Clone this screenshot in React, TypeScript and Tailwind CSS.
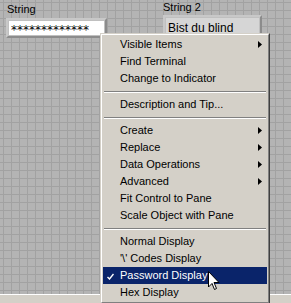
type Item =
  | { kind: "item"; label: string; sub?: boolean; checked?: boolean; active?: boolean }
  | { kind: "sep" };

const items: Item[] = [
  { kind: "item", label: "Visible Items", sub: true },
  { kind: "item", label: "Find Terminal" },
  { kind: "item", label: "Change to Indicator" },
  { kind: "sep" },
  { kind: "item", label: "Description and Tip..." },
  { kind: "sep" },
  { kind: "item", label: "Create", sub: true },
  { kind: "item", label: "Replace", sub: true },
  { kind: "item", label: "Data Operations", sub: true },
  { kind: "item", label: "Advanced", sub: true },
  { kind: "item", label: "Fit Control to Pane" },
  { kind: "item", label: "Scale Object with Pane" },
  { kind: "sep" },
  { kind: "item", label: "Normal Display" },
  { kind: "item", label: "'\\' Codes Display" },
  { kind: "item", label: "Password Display", checked: true, active: true },
  { kind: "item", label: "Hex Display" },
];

function Arrow() {
  return (
    <svg width="4" height="7" viewBox="0 0 4 7" className="ml-auto mr-[5px]">
      <path d="M0 0 L4 3.5 L0 7 Z" fill="#000" />
    </svg>
  );
}

function Check() {
  return (
    <svg width="7" height="7" viewBox="0 0 7 7" className="absolute left-[4px] top-[6px]">
      <path d="M0.5 4 L2.5 6 L6.5 1" stroke="#fff" strokeWidth="1.4" fill="none" />
    </svg>
  );
}

function Cursor() {
  return (
    <svg width="12" height="20" viewBox="0 0 12 20" className="absolute left-[208px] top-[271px]">
      <path
        d="M0.5 0.5 L0.5 16 L4 12.5 L6.5 18.5 L8.5 17.5 L6 11.5 L11 11.5 Z"
        fill="#fff"
        stroke="#000"
        strokeWidth="1"
      />
    </svg>
  );
}

export default function App() {
  return (
    <div className="relative flex h-[303px] w-[291px] flex-col overflow-hidden font-['Liberation_Sans',Arial,sans-serif] text-[11px] leading-none text-black">
      {/* front panel */}
      <div className="flex flex-1 items-start bg-[#b4b4b4] bg-[linear-gradient(to_right,#a2a2a2_1px,transparent_1px),linear-gradient(to_bottom,#a2a2a2_1px,transparent_1px)] bg-[size:8px_8px] bg-[position:3px_2px]">
        {/* String control */}
        <div className="ml-[6px] mt-[4px] flex flex-col">
          <div className="h-[14px] pl-[1px]">String</div>
          <div className="h-[20px] w-[101px] border-2 border-b-[#8c8c8c] border-l-[#c8c8c8] border-r-[#8c8c8c] border-t-[#c8c8c8] bg-[#c0c0c0] p-[1px]">
            <div className="flex h-full items-center bg-white pl-[2px] pt-[3px] font-['DejaVu_Sans',sans-serif] text-[12px]">
              *************
            </div>
          </div>
        </div>

        {/* String 2 indicator */}
        <div className="ml-[56px] mt-[2px] flex flex-col">
          <div className="h-[13px]">String 2</div>
          <div className="h-[22px] w-[99px] border-2 border-b-[#8c8c8c] border-l-[#c8c8c8] border-r-[#8c8c8c] border-t-[#c8c8c8] bg-[#c0c0c0] p-[1px]">
            <div className="h-full bg-[#d6d6d6] pl-[2px] pt-[4px] text-[12px]">Bist du blind</div>
          </div>
        </div>
      </div>

      {/* status bar */}
      <div className="h-[9px] border-t border-white bg-[#d4d0c8]" />

      {/* context menu */}
      <div className="absolute left-[100px] top-[33px] w-[170px] border border-b-[#404040] border-l-[#d4d0c8] border-r-[#404040] border-t-[#d4d0c8] bg-[#d4d0c8]">
        <div className="flex flex-col border border-b-[#808080] border-l-white border-r-[#808080] border-t-white p-[1px]">
          {items.map((it, i) =>
            it.kind === "sep" ? (
              <div key={i} className="flex h-[9px] items-center px-[1px]">
                <div className="h-[2px] w-full border-b border-t border-b-white border-t-[#808080]" />
              </div>
            ) : (
              <div
                key={i}
                className={
                  it.active
                    ? "relative flex h-[17px] items-center bg-[#0a246a] pl-[17px] text-white"
                    : "relative flex h-[17px] items-center pl-[17px]"
                }
              >
                {it.checked && <Check />}
                <span>{it.label}</span>
                {it.sub && <Arrow />}
              </div>
            )
          )}
        </div>
      </div>

      <Cursor />
    </div>
  );
}
